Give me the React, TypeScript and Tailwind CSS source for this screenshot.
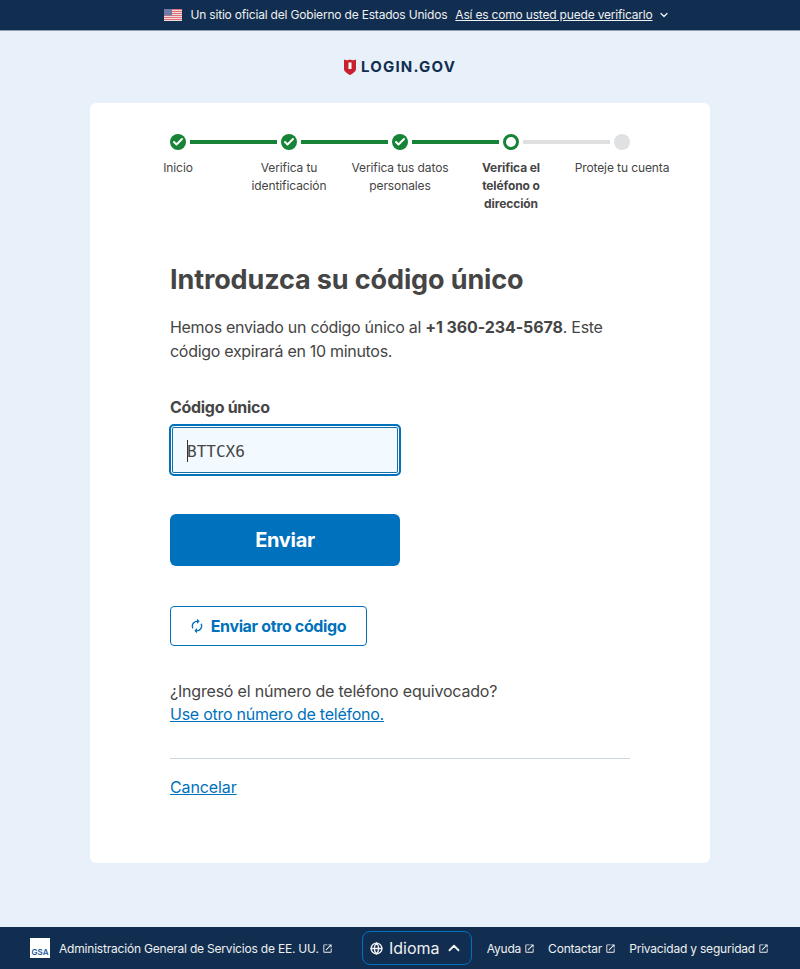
import { Check, ChevronDown, ChevronUp, Globe } from 'lucide-react';

const STEPS = [
  { label: 'Inicio', state: 'done' },
  { label: 'Verifica tu identificación', state: 'done' },
  { label: 'Verifica tus datos personales', state: 'done' },
  { label: 'Verifica el teléfono o dirección', state: 'current' },
  { label: 'Proteje tu cuenta', state: 'todo' },
];

function Flag() {
  return (
    <svg width="18" height="12" viewBox="0 0 18 12" className="shrink-0">
      <rect width="18" height="12" fill="#f3d9dc" />
      {[0, 2, 4, 6, 8, 10].map((y) => (
        <rect key={y} y={y} width="18" height="1" fill="#e0717a" />
      ))}
      <rect width="8" height="6.5" fill="#6f7ba3" />
    </svg>
  );
}

function Shield() {
  return (
    <svg width="12" height="16" viewBox="0 0 12 16" className="shrink-0">
      <path d="M0 .5C2 1.500 4 1.500 6 .5c2 1 4 1 6 0V10c0 2.400-3 4.500-6 6-3-1.500-6-3.600-6-6z" fill="#c8202f" />
      <rect x="4.500" y="3.500" width="3" height="6.500" fill="#fff" />
    </svg>
  );
}

function ExternalIcon() {
  return (
    <svg viewBox="0 0 24 24" fill="currentColor" className="h-[11px] w-[11px] shrink-0">
      <path d="M19 19H5V5h7V3H5a2 2 0 0 0-2 2v14a2 2 0 0 0 2 2h14c1.100 0 2-.9 2-2v-7h-2v7zM14 3v2h3.590l-9.830 9.830 1.410 1.410L19 6.410V10h2V3h-7z" />
    </svg>
  );
}

function ExternalLink({ href, children }: { href: string; children: string }) {
  return (
    <a href={href} className="mt-px flex items-center gap-[3px] text-xs whitespace-nowrap text-[#f0f0f0]">
      {children}
      <ExternalIcon />
    </a>
  );
}

export default function App() {
  return (
    <div className="flex min-h-[969px] flex-col bg-[#e8f1f9] font-['Inter','Liberation_Sans',sans-serif] text-[#454545]">
      {/* Official site banner */}
      <div className="flex h-[31px] items-center justify-center gap-2 border-b border-[#8c9db3] bg-[#112e51] pl-[34px] text-xs tracking-[-0.19px] text-[#f0f0f0]">
        <Flag />
        <span>Un sitio oficial del Gobierno de Estados Unidos</span>
        <a href="#" className="underline">Así es como usted puede verificarlo</a>
        <ChevronDown className="-ml-[3px] h-3 w-3" strokeWidth={2.5} />
      </div>

      {/* Logo */}
      <div className="flex h-[72px] items-center justify-center gap-[5px] pb-[1px]">
        <Shield />
        <span className="text-[15px] leading-none font-bold tracking-[1.2px] text-[#112e51]">LOGIN.GOV</span>
      </div>

      {/* Card */}
      <main className="mx-auto flex h-[760px] w-[620px] flex-col rounded-md bg-white pt-[31px]">
        <ol className="mx-auto grid grid-cols-[repeat(5,111px)]">
          {STEPS.map((step, i) => (
            <li key={step.label} className="flex flex-col items-center">
              <div className="flex h-4 w-full items-center">
                <div className={`mr-1 h-1 flex-1 ${i === 0 ? '' : step.state === 'todo' ? 'bg-[#e0e0e0]' : 'bg-[#178336]'}`} />
                {step.state === 'done' && (
                  <div className="flex h-4 w-4 items-center justify-center rounded-full bg-[#178336]">
                    <Check className="h-3 w-3 text-white" strokeWidth={4} />
                  </div>
                )}
                {step.state === 'current' && <div className="h-4 w-4 rounded-full border-[3px] border-[#178336] bg-white" />}
                {step.state === 'todo' && <div className="h-4 w-4 rounded-full bg-[#dfe1e2]" />}
                <div className={`ml-1 h-1 flex-1 ${i === 4 ? '' : i < 3 ? 'bg-[#178336]' : 'bg-[#e0e0e0]'}`} />
              </div>
              <span className={`mt-[9px] px-1 text-center text-xs leading-[18px] tracking-[-0.1px] ${step.state === 'current' ? 'font-bold' : ''}`}>
                {step.label}
              </span>
            </li>
          ))}
        </ol>

        <div className="mx-20 mt-[49px] flex flex-1 flex-col">
          <h1 className="text-[27px] leading-9 font-bold tracking-[-0.12px]">Introduzca su código único</h1>
          <p className="mt-[17px] text-base leading-6 tracking-[-0.3px]">
            Hemos enviado un código único al <strong className="tracking-[-0.1px]">+1 360-234-5678</strong>. Este código expirará en 10 minutos.
          </p>

          <label className="mt-[32px] text-base leading-6 font-bold tracking-[-0.3px]">Código único</label>
          <div className="mt-[5px] -ml-px flex h-[52px] w-[232px] items-center rounded-[5px] border-2 border-[#0071bc] bg-[#f2f9ff] pl-4 font-['DejaVu_Sans_Mono',monospace] text-base shadow-[inset_0_0_0_1px_#fff,inset_0_0_0_2px_#1a6ea8]">
            <span className="mt-[1px] h-[22px] w-px bg-[#333]" />
            <span className="mt-[3px] -ml-px">BTTCX6</span>
          </div>

          <button className="mt-[38px] h-[52px] w-[230px] rounded-md bg-[#0071bc] text-xl font-bold tracking-[-0.3px] text-white">Enviar</button>

          <button className="mt-10 flex h-10 w-[197px] items-center justify-center gap-[6px] rounded border border-[#0071bc] pr-[2px] text-base font-bold tracking-[-0.35px] text-[#0071bc]">
            <svg viewBox="0 0 24 24" fill="currentColor" className="h-4 w-4">
              <path d="M12 6v3l4-4-4-4v3c-4.420 0-8 3.580-8 8 0 1.570.46 3.030 1.240 4.260L6.700 14.800c-.45-.83-.7-1.790-.7-2.800 0-3.310 2.690-6 6-6zm6.760 1.740L17.300 9.200c.44.84.7 1.790.7 2.800 0 3.310-2.690 6-6 6v-3l-4 4 4 4v-3c4.420 0 8-3.580 8-8 0-1.570-.46-3.030-1.240-4.260z" />
            </svg>
            Enviar otro código
          </button>

          <p className="mt-[33px] text-base leading-6 tracking-[-0.2px]">¿Ingresó el número de teléfono equivocado?</p>
          <a href="#" className="-mt-px text-base leading-6 tracking-[-0.25px] text-[#0071bc] underline">Use otro número de teléfono.</a>

          <hr className="mt-[32px] border-[#c9d9e6]" />
          <a href="#" className="mt-4 w-fit text-base leading-6 tracking-[-0.1px] text-[#0071bc] underline">Cancelar</a>
        </div>
      </main>

      {/* Footer */}
      <footer className="mt-auto flex h-[42px] items-center bg-[#112e51] pr-[31px] pl-[30px] text-xs tracking-[-0.2px] text-[#f0f0f0]">
        <div className="flex h-5 w-5 items-end justify-center bg-white text-[8px] leading-[11px] font-semibold tracking-normal text-[#1d5a9c]">GSA</div>
        <div className="ml-[9px]">
          <ExternalLink href="#">Administración General de Servicios de EE. UU.</ExternalLink>
        </div>
        <button className="ml-[29px] flex h-[34px] w-[110px] items-center justify-center gap-[6px] rounded-lg border border-[#0071bc] text-base tracking-normal">
          <Globe className="h-[13px] w-[13px]" strokeWidth={2.5} />
          Idioma
          <ChevronUp className="h-[18px] w-[18px]" strokeWidth={2.5} />
        </button>
        <div className="ml-auto flex items-center gap-[13px]">
          <ExternalLink href="#">Ayuda</ExternalLink>
          <ExternalLink href="#">Contactar</ExternalLink>
          <ExternalLink href="#">Privacidad y seguridad</ExternalLink>
        </div>
      </footer>
    </div>
  );
}
